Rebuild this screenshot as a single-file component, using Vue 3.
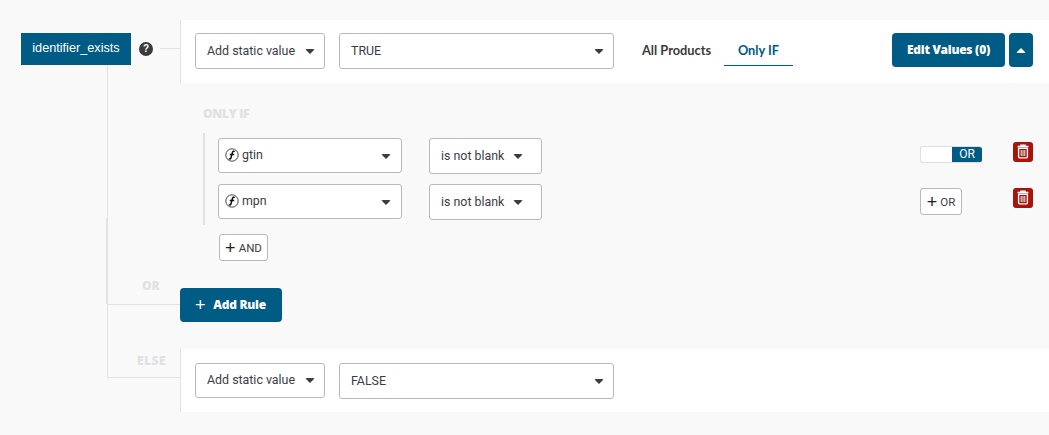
<script setup>
const conditions = [
  { field: 'gtin', action: 'toggle' },
  { field: 'mpn', action: 'add' },
]
const mainRows = [
  { mode: 'Add static value', value: 'TRUE' },
  { mode: 'Add static value', value: 'FALSE' },
]
</script>

<template>
  <div class="page">
    <span class="line vertical"></span>
    <span class="line vertical-thick"></span>
    <span class="line stub"></span>
    <span class="line or-line"></span>
    <span class="line else-line"></span>

    <section class="top-row">
      <div class="name">identifier_exists</div>
      <span class="help">?</span>
      <div class="card top-card">
        <button class="select mode">
          <span>{{ mainRows[0].mode }}</span><i class="caret"></i>
        </button>
        <button class="select value">
          <span>{{ mainRows[0].value }}</span><i class="caret"></i>
        </button>
        <div class="tabs">
          <span class="tab">All Products</span>
          <span class="tab active">Only IF</span>
        </div>
        <button class="primary edit">Edit Values (0)</button>
        <button class="primary collapse"><i class="caret up"></i></button>
      </div>
    </section>

    <section class="only-if">
      <h4 class="faint only-title">ONLY IF</h4>
      <div class="conditions">
        <div v-for="c in conditions" :key="c.field" class="condition">
          <button class="select field">
            <span class="field-name">
              <svg class="fn" viewBox="0 0 14 14" width="14" height="14">
                <circle cx="7" cy="7" r="6.2" fill="#fff" stroke="#333" stroke-width="0.9" />
                <path d="M9.8 3.5c-.9-.6-2-.3-2.3.8L5.9 10c-.3 1.1-1.3 1.2-2.1.7M4.8 6.4h4.4" fill="none" stroke="#111" stroke-width="1.5" />
              </svg>
              {{ c.field }}
            </span>
            <i class="caret"></i>
          </button>
          <button class="select operator">
            <span>is not blank</span><i class="caret"></i>
          </button>
          <div class="logic">
            <div v-if="c.action === 'toggle'" class="toggle"><span class="toggle-on">OR</span></div>
            <button v-else class="small-add or-add"><b class="plus">+</b>OR</button>
          </div>
          <button class="delete" aria-label="Delete">
            <svg viewBox="0 0 20 20" width="20" height="20">
              <path d="M4.6 4.6h10.8M8 4.4V3.2h4v1.2" fill="none" stroke="#fff" stroke-width="1.5" />
              <path d="M5.6 6.3h8.8v8.4a1.2 1.2 0 0 1-1.2 1.2H6.8a1.2 1.2 0 0 1-1.2-1.2z" fill="none" stroke="#fff" stroke-width="1.4" />
              <path d="M8.2 8v6M10 8v6M11.8 8v6" stroke="#fff" stroke-width="0.9" />
            </svg>
          </button>
        </div>
      </div>
      <button class="small-add and-add"><b class="plus">+</b>AND</button>
    </section>

    <section class="add-rule-row">
      <span class="faint or-label">OR</span>
      <button class="primary add-rule"><b class="rule-plus">+</b>Add Rule</button>
    </section>

    <section class="else-row">
      <span class="faint else-label">ELSE</span>
      <div class="card else-card">
        <button class="select mode">
          <span>{{ mainRows[1].mode }}</span><i class="caret"></i>
        </button>
        <button class="select value">
          <span>{{ mainRows[1].value }}</span><i class="caret"></i>
        </button>
      </div>
    </section>
  </div>
</template>

<style>
html, body { margin: 0; background: #f9f9f9; }
</style>

<style scoped>
.page {
  position: relative;
  width: 1049px;
  height: 435px;
  overflow: hidden;
  box-sizing: border-box;
  padding-top: 20px;
  background: #f9f9f9;
  color: #3b3d45;
  font: 12.4px/16px Roboto, "Liberation Sans", sans-serif;
}
button { font: inherit; color: inherit; padding: 0; cursor: pointer; }

.line { position: absolute; background: #e2e2e2; }
.vertical { left: 107px; top: 65px; width: 1px; height: 312px; }
.vertical-thick { left: 106px; top: 218px; width: 2px; height: 86px; }
.stub { left: 160px; top: 48px; width: 20px; height: 1px; }
.or-line { left: 107px; top: 304px; width: 73px; height: 1px; }
.else-line { left: 107px; top: 377px; width: 74px; height: 1px; }

.top-row { display: flex; align-items: flex-start; padding-left: 21px; }
.name {
  width: 110px;
  height: 32px;
  margin-top: 13px;
  background: #005b85;
  color: #fff;
  font: 12.7px/31px "Liberation Sans", Arial, sans-serif;
  text-align: center;
}
.help {
  width: 14px;
  height: 14px;
  margin: 22px 0 0 8px;
  border-radius: 50%;
  background: #3c3c3c;
  color: #fff;
  font: bold 10px/14px "Liberation Sans", sans-serif;
  text-align: center;
}
.card {
  display: flex;
  align-items: flex-start;
  flex: none;
  height: 63px;
  box-sizing: border-box;
  padding: 13px 16px 0 14px;
  background: #fff;
  border-left: 1px solid #e2e2e2;
}
.top-card { width: 869px; margin-left: 27px; }

.select {
  display: flex;
  align-items: center;
  justify-content: space-between;
  flex: none;
  box-sizing: border-box;
  height: 36px;
  border: 1px solid #b9b9b9;
  border-radius: 3px;
  background: #fff;
  text-align: left;
}
.mode { width: 130px; padding: 0 9px 0 11px; }
.value { width: 275px; margin-left: 14px; padding: 0 9px 0 11px; }
.caret {
  display: block;
  width: 0;
  height: 0;
  margin-top: 1px;
  border: 5px solid transparent;
  border-top-color: #3c3c3c;
  border-bottom-width: 0;
  border-radius: 2px;
}
.caret.up { border-top-width: 0; border-bottom: 5px solid #fff; margin: 0; }

.tabs {
  display: flex;
  flex: none;
  margin-left: 13px;
  white-space: nowrap;
  font: 700 12.8px/16px Lato, "Open Sans", sans-serif;
}
.tab { height: 33px; width: 97px; padding: 9px 0 0 15px; box-sizing: border-box; color: #3a3a3a; }
.tab.active {
  width: 69px;
  padding: 9px 0 0;
  text-align: center;
  color: #005b85;
  border-bottom: 1px solid #005b85;
}

.primary {
  flex: none;
  border: 0;
  border-radius: 4px;
  background: #005b85;
  color: #fff;
  font: 800 12px/16px "Open Sans", Lato, sans-serif;
  letter-spacing: -0.27px;
}
.edit { width: 113px; height: 34px; margin-left: 99px; }
.collapse {
  display: flex;
  align-items: center;
  justify-content: center;
  width: 24px;
  height: 34px;
  margin-left: 4px;
}

.faint { color: #e0e1e3; font: 800 12px/14px "Open Sans", Lato, sans-serif; margin: 0; }
.only-title { letter-spacing: -0.3px; }
.only-if { padding: 24px 0 0 203px; }
.conditions {
  display: flex;
  flex-direction: column;
  gap: 10px;
  margin-top: 12px;
  width: 830px;
  padding: 5px 0 5px 13px;
  border-left: 2px solid #e2e2e2;
}
.condition { display: flex; align-items: flex-start; height: 36px; }
.field { width: 184px; height: 35px; padding: 0 10px 0 6px; }
.field-name { display: flex; align-items: center; gap: 3px; margin-top: -1px; }
.fn { display: block; }
.operator { width: 113px; margin-left: 27px; padding: 0 18px 0 11px; }
.logic { width: 93px; margin-left: 378px; flex: none; }
.toggle {
  display: flex;
  justify-content: flex-end;
  box-sizing: border-box;
  width: 62px;
  height: 17px;
  margin-top: 8px;
  border: 1px solid #dedede;
  border-right: 0;
  border-radius: 3px;
  background: #fff;
  overflow: hidden;
}
.toggle-on {
  width: 30px;
  background: #005b85;
  color: #fff;
  font: 12px/15px Roboto, sans-serif;
  text-align: center;
}
.delete {
  display: block;
  flex: none;
  width: 20px;
  height: 20px;
  margin-top: 4px;
  border: 0;
  border-radius: 3px;
  background: #a8140c;
}
.delete svg { display: block; }
.small-add {
  display: flex;
  align-items: center;
  justify-content: center;
  gap: 3px;
  box-sizing: border-box;
  border: 1px solid #b9b9b9;
  border-radius: 3px;
  background: #fff;
  font-size: 11.5px;
}
.plus { font: 400 18px/16px "Liberation Sans", sans-serif; color: #222; }
.or-add { width: 42px; height: 27px; margin-top: 4px; }
.and-add { width: 49px; height: 27px; margin: 9px 0 0 16px; }

.add-rule-row {
  position: relative;
  height: 34px;
  margin-top: 27px;
  padding-left: 180px;
}
.or-label { position: absolute; left: 142px; top: -9px; }
.add-rule {
  display: flex;
  align-items: center;
  width: 102px;
  height: 34px;
  padding-left: 15px;
  box-sizing: border-box;
}
.rule-plus { font: 400 18px/16px "Liberation Sans", sans-serif; margin-right: 8px; }

.else-row {
  position: relative;
  margin-top: 27px;
  padding-left: 180px;
}
.else-label { position: absolute; left: 137px; top: 5px; letter-spacing: 0.5px; }
.else-card { width: 869px; padding-top: 14px; }
.else-card .mode { height: 35px; padding-bottom: 1px; }
.else-card .value { padding-bottom: 1px; }
</style>
